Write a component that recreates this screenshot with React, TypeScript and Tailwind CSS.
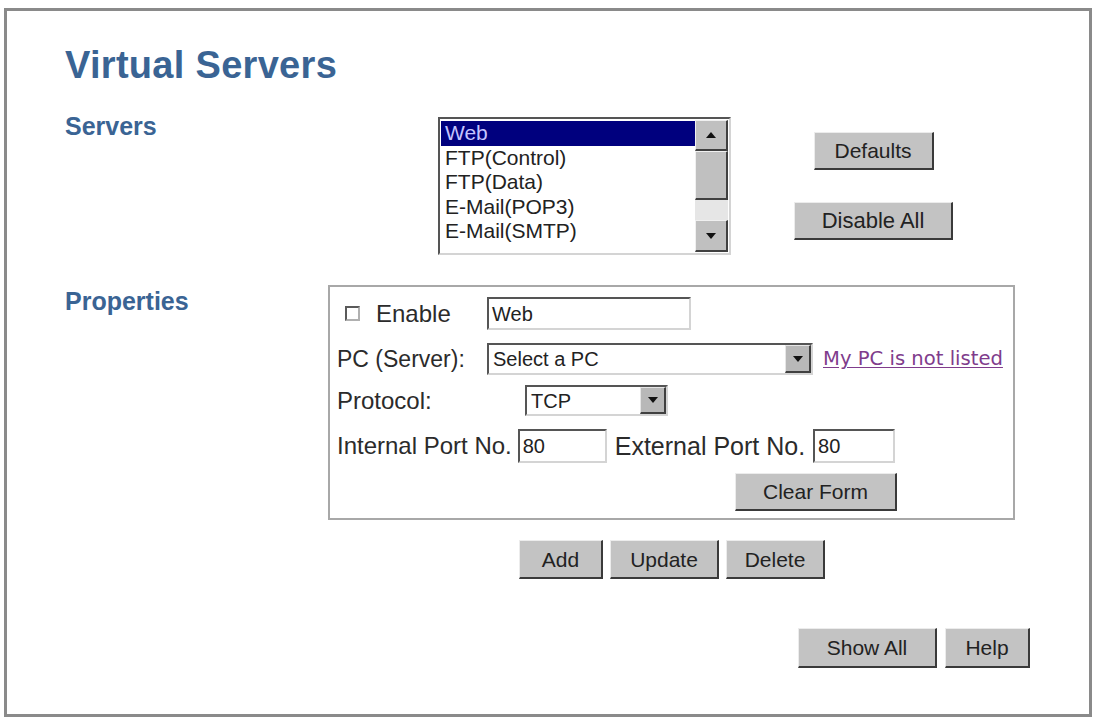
import React from "react";

const btn =
  "flex items-center justify-center bg-[#c3c3c3] text-[#222] text-[21px] leading-none border-t border-l border-t-[#ececec] border-l-[#ececec] border-r-2 border-b-2 border-r-[#3a3a3a] border-b-[#3a3a3a]";

const inset =
  "bg-white border-2 border-t-[#555] border-l-[#555] border-r-[#d4d4d4] border-b-[#d4d4d4]";

function Arrow({ up = false }: { up?: boolean }) {
  return (
    <svg width="10" height="6" viewBox="0 0 10 6">
      {up ? <polygon points="0,6 10,6 5,0" fill="#111" /> : <polygon points="0,0 10,0 5,6" fill="#111" />}
    </svg>
  );
}

function ScrollBtn({ up, h }: { up?: boolean; h: string }) {
  return (
    <div
      className={`${h} flex items-center justify-center bg-[#c0c0c0] border-t border-l border-t-[#f0f0f0] border-l-[#f0f0f0] border-r-2 border-b-2 border-r-[#404040] border-b-[#404040]`}
    >
      <Arrow up={up} />
    </div>
  );
}

function Select({ value, w }: { value: string; w: string }) {
  return (
    <div className={`${w} h-full flex ${inset}`}>
      <div className="flex-1 flex items-center pl-[4px] text-[20px] text-[#222]">{value}</div>
      <div className="w-[26px] flex items-center justify-center bg-[#b8b8b8] border-t border-l border-t-[#e6e6e6] border-l-[#e6e6e6] border-r-2 border-b-2 border-r-[#404040] border-b-[#404040]">
        <Arrow />
      </div>
    </div>
  );
}

function TextInput({ value, w }: { value: string; w: string }) {
  return (
    <div className={`${w} h-full flex items-center pl-[3px] text-[20px] text-[#222] ${inset}`}>{value}</div>
  );
}

const servers = ["Web", "FTP(Control)", "FTP(Data)", "E-Mail(POP3)", "E-Mail(SMTP)"];

export default function App() {
  return (
    <div
      className="w-[1095px] h-[720px] bg-white pt-[8px] pl-[4px] text-[#2b2b2b]"
      style={{ fontFamily: '"Liberation Sans", Arial, sans-serif' }}
    >
      <div className="w-[1088px] h-[709px] border-[3px] border-[#8a8a8a] flex flex-col pl-[58px] pt-[35px]">
        {/* Title */}
        <h1 className="text-[38px] leading-none font-bold text-[#3a6494] tracking-[0.3px]">Virtual Servers</h1>

        {/* Servers */}
        <div className="flex items-start mt-[30px]">
          <div className="w-[373px] text-[25px] leading-none font-bold text-[#3a6494]">Servers</div>
          <div className={`mt-[3px] w-[293px] h-[138px] flex p-[1px] ${inset}`}>
            <div className="flex-1 overflow-hidden pt-[1px]">
              {servers.map((s, i) => (
                <div
                  key={s}
                  className={`h-[24.5px] leading-[24px] pl-[4px] text-[21px] ${
                    i === 0 ? "bg-[#00007e] text-[#c4c4ff]" : "text-[#222]"
                  }`}
                >
                  {s}
                </div>
              ))}
            </div>
            <div className="w-[33px] flex flex-col">
              <ScrollBtn up h="h-[31px]" />
              <div className="h-[49px] bg-[#c0c0c0] border-t border-l border-t-[#f0f0f0] border-l-[#f0f0f0] border-r-2 border-b-2 border-r-[#404040] border-b-[#404040]" />
              <div className="flex-1 bg-[#e6e6e6]" />
              <ScrollBtn h="h-[32px]" />
            </div>
          </div>
          <div className="ml-[63px] mt-[18px] w-[159px] flex flex-col items-center gap-[32px]">
            <button className={`${btn} w-[120px] h-[38px]`}>Defaults</button>
            <button className={`${btn} w-[159px] h-[38px] text-[22px]`}>Disable All</button>
          </div>
        </div>

        {/* Properties */}
        <div className="flex items-start mt-[30px]">
          <div className="w-[263px] pt-[4px] text-[25px] leading-none font-bold text-[#3a6494]">Properties</div>
          <div className="w-[687px] h-[235px] border-2 border-[#a8a8a8] pl-[7px] pt-[10px] flex flex-col">
            <div className="h-[33px] flex items-center">
              <div className="w-[150px] flex items-center">
                <div className="ml-[8px] w-[15px] h-[15px] bg-white border-2 border-t-[#5a5a5a] border-l-[#5a5a5a] border-r-[#b0b0b0] border-b-[#b0b0b0]" />
                <span className="ml-[16px] text-[24px] leading-none">Enable</span>
              </div>
              <TextInput value="Web" w="w-[204px]" />
            </div>
            <div className="mt-[13px] h-[32px] flex items-center">
              <div className="w-[150px] text-[23px] leading-none">PC (Server):</div>
              <Select value="Select a PC" w="w-[326px]" />
              <a
                href="#"
                className="ml-[10px] leading-none text-[#803c8c] underline underline-offset-2"
                style={{ fontFamily: '"DejaVu Sans", sans-serif', fontSize: "19.6px" }}
              >
                My PC is not listed
              </a>
            </div>
            <div className="mt-[10px] h-[31px] flex items-center">
              <div className="w-[188px] text-[24px] leading-none">Protocol:</div>
              <Select value="TCP" w="w-[143px]" />
            </div>
            <div className="mt-[13px] h-[34px] flex items-center">
              <span className="text-[24px] leading-none">Internal Port No.</span>
              <div className="ml-[6px] h-full">
                <TextInput value="80" w="w-[89px]" />
              </div>
              <span className="ml-[8px] text-[25px] leading-none">External Port No.</span>
              <div className="ml-[8px] h-full">
                <TextInput value="80" w="w-[82px]" />
              </div>
            </div>
            <div className="mt-[10px] flex">
              <button className={`${btn} ml-[398px] w-[162px] h-[38px]`}>Clear Form</button>
            </div>
          </div>
        </div>

        {/* Add / Update / Delete */}
        <div className="flex gap-[7px] mt-[20px] ml-[454px]">
          <button className={`${btn} w-[84px] h-[39px]`}>Add</button>
          <button className={`${btn} w-[109px] h-[39px]`}>Update</button>
          <button className={`${btn} w-[99px] h-[39px]`}>Delete</button>
        </div>

        {/* Show All / Help */}
        <div className="flex gap-[8px] mt-[49px] ml-[733px]">
          <button className={`${btn} w-[139px] h-[40px]`}>Show All</button>
          <button className={`${btn} w-[85px] h-[40px]`}>Help</button>
        </div>
      </div>
    </div>
  );
}
